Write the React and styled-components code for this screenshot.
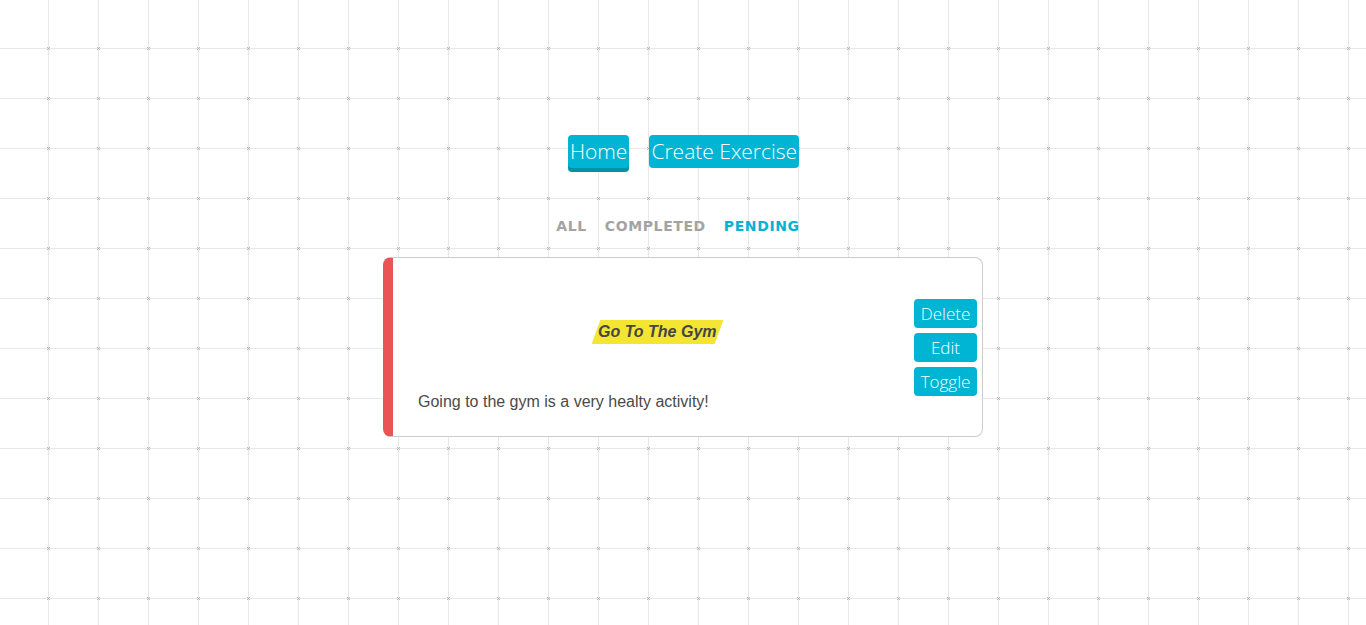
import styled, { createGlobalStyle } from "styled-components";

const gridTile =
  "data:image/svg+xml;utf8," +
  encodeURIComponent(
    "<svg xmlns='http://www.w3.org/2000/svg' width='50' height='50'>" +
      "<path d='M25.5 0V50M0 25.5H50' stroke='#e8e8e8' stroke-width='1'/>" +
      "<path d='M24 24L27 27M27 24L24 27' stroke='#aaa' stroke-width='0.8'/>" +
      "</svg>"
  );

const GlobalStyle = createGlobalStyle`
  html, body {
    margin: 0;
    padding: 0;
    min-height: 100%;
  }
  body {
    background-color: #fff;
    background-image: url("${gridTile}");
    background-size: 50px 50px;
    background-position: 23px 23px;
    font-family: "Liberation Sans", Arial, sans-serif;
    min-height: 625px;
  }
`;

export default function App() {
  return (
    <>
      <GlobalStyle />
      <Container>
        <Nav>
          <NavButton active>Home</NavButton>
          <NavButton>Create Exercise</NavButton>
        </Nav>
        <Filters>
          <Filter>ALL</Filter>
          <Filter>COMPLETED</Filter>
          <Filter selected>PENDING</Filter>
        </Filters>
        <Card>
          <CardBody>
            <TitleWrap>
              <Title>
                <TitleText>Go To The Gym</TitleText>
              </Title>
            </TitleWrap>
            <Description>Going to the gym is a very healty activity!</Description>
          </CardBody>
          <Actions>
            <ActionButton>Delete</ActionButton>
            <ActionButton>Edit</ActionButton>
            <ActionButton>Toggle</ActionButton>
          </Actions>
        </Card>
      </Container>
    </>
  );
}

const Container = styled.div`
  display: flex;
  flex-direction: column;
  align-items: center;
  padding-top: 135px;
`;

const Nav = styled.div`
  display: flex;
  gap: 20px;
  align-items: flex-start;
  height: 37px;
  padding-left: 1px;
`;

const NavButton = styled.button`
  font-family: "Open Sans", sans-serif;
  font-weight: 300;
  font-size: 21px;
  color: #fff;
  background: #00b4d4;
  border: none;
  border-radius: 4px;
  height: 33px;
  padding: 0 2px;
  line-height: 33px;
  cursor: pointer;
  box-shadow: ${(p) => (p.active ? "0 4px 0 #0093a8" : "none")};
`;

const Filters = styled.div`
  display: flex;
  gap: 18px;
  margin-top: 44px;
  height: 20px;
  align-items: center;
  padding-right: 10px;
`;

const Filter = styled.span`
  font-family: "DejaVu Sans", sans-serif;
  font-weight: bold;
  font-size: 14px;
  letter-spacing: 0.6px;
  color: ${(p) => (p.selected ? "#00b4d4" : "#a3a3a3")};
  cursor: pointer;
`;

const Card = styled.div`
  box-sizing: border-box;
  margin-top: 21px;
  width: 600px;
  height: 180px;
  display: flex;
  align-items: center;
  background: #fff;
  border: 1px solid #cccccc;
  border-left: 10px solid #ea5455;
  border-radius: 8px;
`;

const CardBody = styled.div`
  flex: 1;
  align-self: stretch;
  display: flex;
  flex-direction: column;
  padding: 62px 17px 0 25px;
`;

const TitleWrap = styled.div`
  display: flex;
  justify-content: center;
`;

const Title = styled.div`
  background: #f3e532;
  transform: skewX(-20deg);
  padding: 0 2px;
  height: 24px;
  display: flex;
  align-items: center;
`;

const TitleText = styled.span`
  display: inline-block;
  transform: skewX(20deg);
  font-family: "Liberation Sans", Arial, sans-serif;
  font-style: italic;
  font-weight: bold;
  font-size: 16px;
  color: #454545;
`;

const Description = styled.p`
  margin: 49px 0 0;
  font-size: 16px;
  color: #4a4a4a;
`;

const Actions = styled.div`
  display: flex;
  flex-direction: column;
  gap: 5px;
  padding-right: 5px;
`;

const ActionButton = styled.button`
  width: 63px;
  height: 29px;
  border: none;
  border-radius: 4px;
  background: #00b4d4;
  color: #fff;
  font-family: "Open Sans", sans-serif;
  font-weight: 300;
  font-size: 17px;
  padding: 0;
  cursor: pointer;
`;
